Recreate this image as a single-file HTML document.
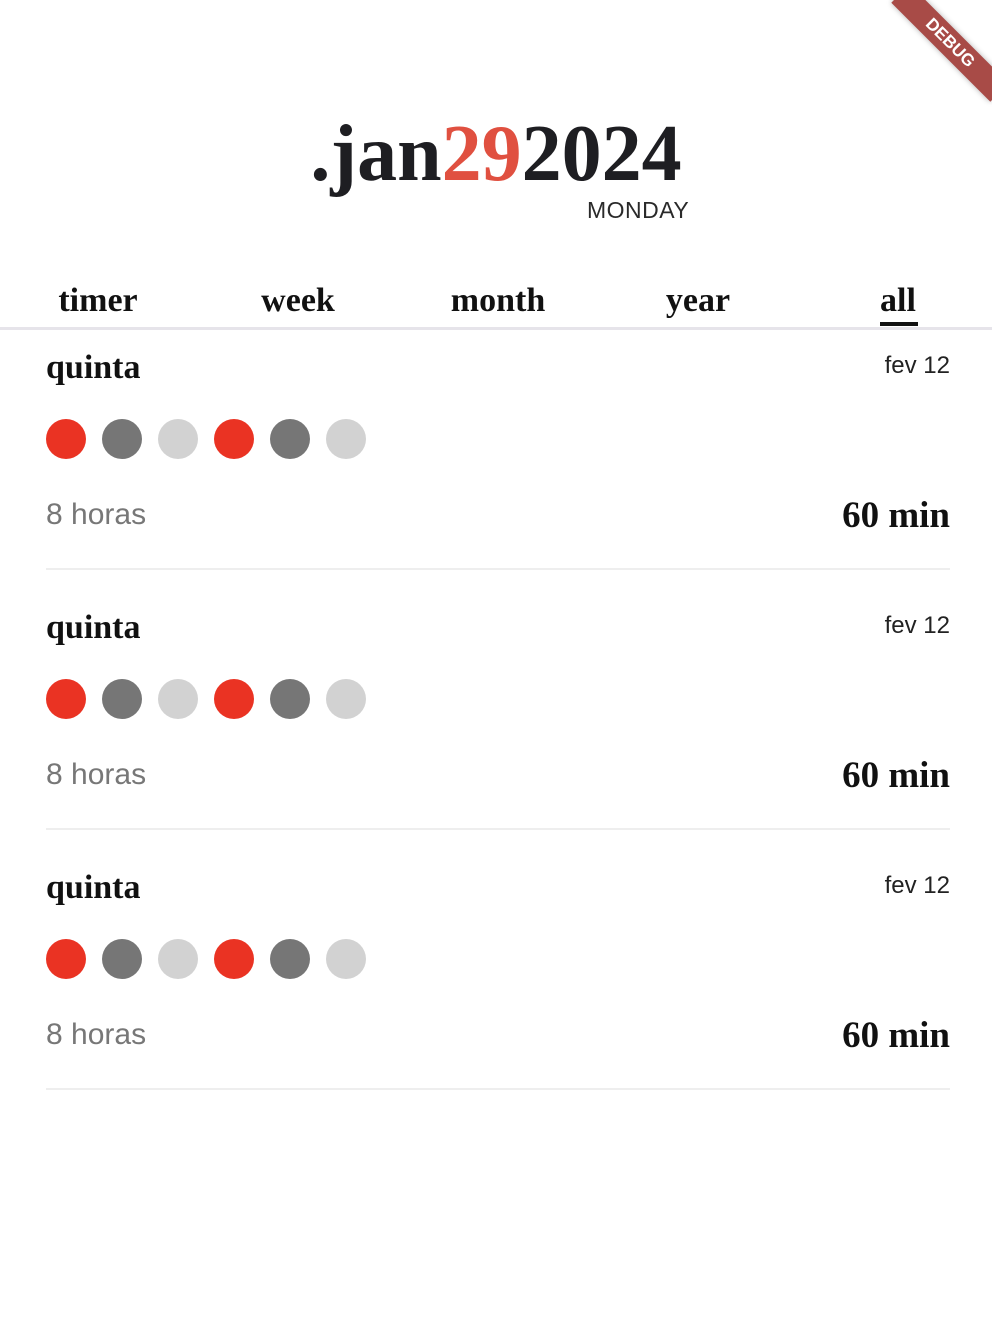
<!DOCTYPE html>
<html><head><meta charset="utf-8"><style>
*{margin:0;padding:0;box-sizing:border-box}
body{width:992px;height:1334px;background:#fff;position:relative;overflow:hidden;font-family:"Liberation Sans",sans-serif}
.serif{font-family:"Liberation Serif",serif;font-weight:bold}
.title{position:absolute;left:0;width:992px;top:104px;text-align:center;font-size:80px;color:#1e1e22;letter-spacing:0px;line-height:100px}
.title span{color:#e05040}
.day{position:absolute;left:587px;top:197px;font-size:23px;color:#2a2a2a;letter-spacing:0.5px}
.tab{position:absolute;top:281px;width:200px;text-align:center;font-size:34px;color:#111;line-height:40px}
.ul{position:absolute;left:880px;top:322px;width:38px;height:4px;background:#111}
.div{position:absolute;left:0;top:327px;width:992px;height:3px;background:#e6e4ea}
.card{position:absolute;left:46px;width:904px;height:260px}
.q{position:absolute;left:0;top:8px;font-size:34px;color:#111;line-height:40px}
.f{position:absolute;right:0;top:12px;font-size:24px;color:#222}
.dot{position:absolute;top:79px;width:40px;height:40px;border-radius:50%}
.r{background:#ea3323}.g{background:#767676}.l{background:#d2d2d2}
.h{position:absolute;left:0;top:158px;font-size:30px;color:#777}
.m{position:absolute;right:0;top:156px;font-size:37px;color:#111;line-height:40px}
.hr{position:absolute;left:0;top:228px;width:904px;height:2px;background:#eeeeee}
.debug{position:absolute;left:880px;top:30px;width:140px;height:26px;background:#a84b47;color:#fff;font-size:17px;font-weight:bold;text-align:center;line-height:26px;transform:rotate(45deg);box-shadow:0 0 6px rgba(0,0,0,.3)}
</style></head><body>
<div class="title serif">.jan<span>29</span>2024</div>
<div class="day">MONDAY</div>
<div class="tab serif" style="left:-2px">timer</div>
<div class="tab serif" style="left:198px">week</div>
<div class="tab serif" style="left:398px">month</div>
<div class="tab serif" style="left:598px">year</div>
<div class="tab serif" style="left:798px">all</div>
<div class="ul"></div>
<div class="div"></div>

<div class="card" style="top:340px">
<div class="q serif">quinta</div><div class="f">fev 12</div>
<div class="dot r" style="left:0"></div><div class="dot g" style="left:56px"></div><div class="dot l" style="left:112px"></div><div class="dot r" style="left:168px"></div><div class="dot g" style="left:224px"></div><div class="dot l" style="left:280px"></div>
<div class="h">8 horas</div><div class="m serif">60 min</div><div class="hr"></div>
</div>
<div class="card" style="top:600px">
<div class="q serif">quinta</div><div class="f">fev 12</div>
<div class="dot r" style="left:0"></div><div class="dot g" style="left:56px"></div><div class="dot l" style="left:112px"></div><div class="dot r" style="left:168px"></div><div class="dot g" style="left:224px"></div><div class="dot l" style="left:280px"></div>
<div class="h">8 horas</div><div class="m serif">60 min</div><div class="hr"></div>
</div>
<div class="card" style="top:860px">
<div class="q serif">quinta</div><div class="f">fev 12</div>
<div class="dot r" style="left:0"></div><div class="dot g" style="left:56px"></div><div class="dot l" style="left:112px"></div><div class="dot r" style="left:168px"></div><div class="dot g" style="left:224px"></div><div class="dot l" style="left:280px"></div>
<div class="h">8 horas</div><div class="m serif">60 min</div><div class="hr"></div>
</div>
<div class="debug">DEBUG</div>
</body></html>
